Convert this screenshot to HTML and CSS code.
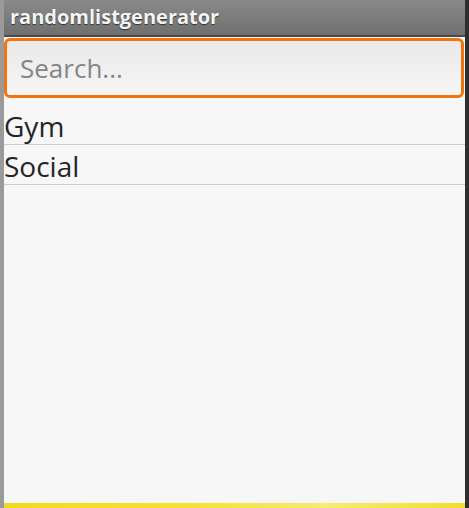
FILE: index.html
```html
<!DOCTYPE html>
<html lang="en">
<head>
    <meta charset="UTF-8">
    <title>randomlistgenerator</title>
    <link rel="stylesheet" href="styles.css">
</head>
<body>
    <div class="screen">
        <div class="edge-left"></div>
        <div class="app">
            <div class="title-bar">randomlistgenerator</div>
            <div class="search-wrap">
                <input type="text" class="search" placeholder="Search...">
            </div>
            <ul class="list">
                <li>Gym</li>
                <li>Social</li>
            </ul>
            <div class="spacer"></div>
            <div class="wallpaper"></div>
        </div>
        <div class="edge-right"></div>
    </div>
</body>
</html>
```

FILE: styles.css
```css
* {
    margin: 0;
    padding: 0;
    box-sizing: border-box;
    font-family: 'Open Sans', sans-serif;
}

body {
    width: 469px;
    height: 508px;
    overflow: hidden;
    background: #f7f7f7;
}

.screen {
    display: flex;
    height: 508px;
}

.edge-left {
    width: 4px;
    background: #9a9a9a;
}

.edge-right {
    width: 4px;
    background: #2e2e2e;
}

.app {
    flex: 1;
    display: flex;
    flex-direction: column;
    background: #f7f7f7;
}

.title-bar {
    height: 37px;
    padding: 3px 0 0 6px;
    background: linear-gradient(#8a8a8a, #6f6f6f);
    border-bottom: 2px solid #4a4a4a;
    color: #f4f4f4;
    font-size: 20px;
    font-weight: bold;
    text-shadow: 0 1px 1px #333;
}

.search-wrap {
    padding: 1px 1px 0 0;
}

.search {
    display: block;
    width: 100%;
    height: 60px;
    padding: 0 13px;
    border: 3px solid #f07410;
    border-radius: 6px;
    background: linear-gradient(#e9e9e9, #f6f6f6);
    font-size: 26px;
    color: #333;
    outline: none;
}

.search::placeholder {
    color: #858585;
}

.list {
    list-style: none;
    margin-top: 7px;
}

.list li {
    height: 40px;
    padding-top: 1px;
    border-bottom: 1px solid #cfcfcf;
    font-size: 28px;
    color: #252525;
    line-height: 40px;
}

.spacer {
    flex: 1;
}

.wallpaper {
    height: 5px;
    background: linear-gradient(90deg, #f1dc1a, #f3e232 40%, #f6ec70 70%, #f0df2a);
}
```
